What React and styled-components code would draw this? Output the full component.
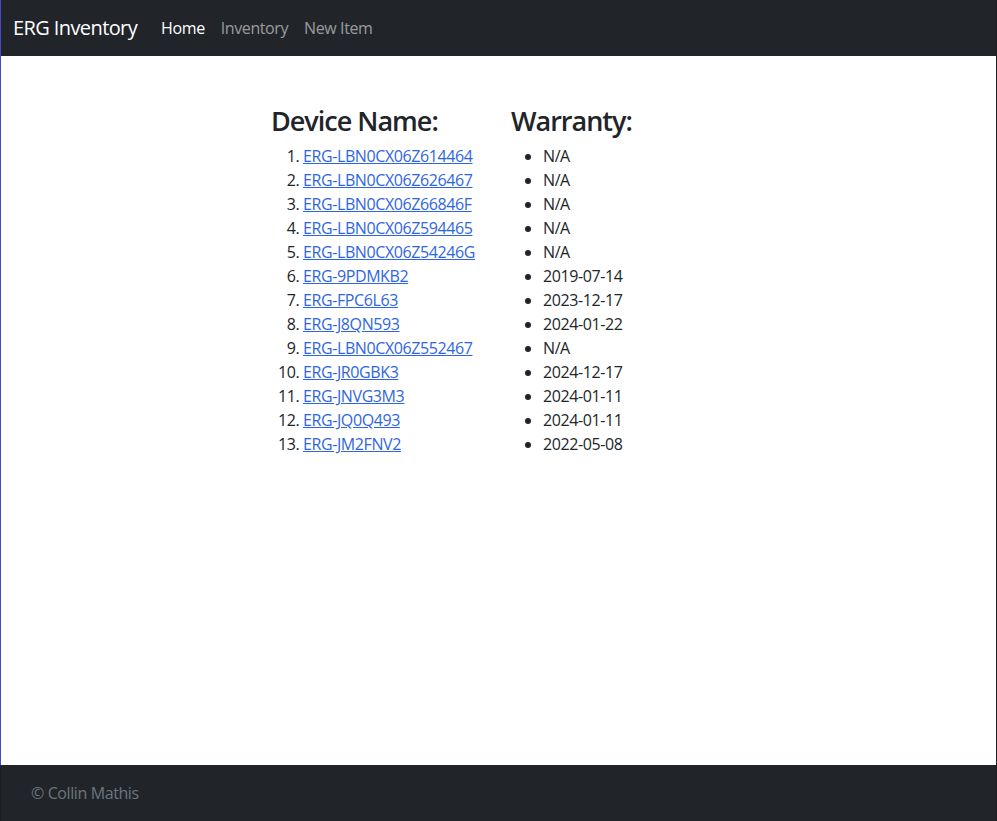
import React from "react";
import styled, { createGlobalStyle } from "styled-components";

const Global = createGlobalStyle`
  html, body { margin: 0; padding: 0; }
  body {
    font-family: "Open Sans", "Noto Sans", sans-serif;
    font-size: 16px;
    line-height: 24px;
    letter-spacing: -0.4px;
    color: #212529;
    background: #fff;
  }
`;

const Page = styled.div`
  display: flex;
  flex-direction: column;
  height: 821px;
  border-right: 1px solid #1b1d21;
  box-sizing: border-box;
`;

const NavBar = styled.nav`
  display: flex;
  align-items: center;
  height: 56px;
  flex: none;
  padding: 0 12px;
  background: #212529;
  border-left: 1px solid #4a48c8;
`;

const Brand = styled.a`
  font-size: 20px;
  letter-spacing: -0.6px;
  color: #fff;
  margin-right: 16px;
  text-decoration: none;
`;

const NavLink = styled.a`
  padding: 8px;
  color: ${(p) => (p.$active ? "#fff" : "rgba(255,255,255,0.55)")};
  text-decoration: none;
`;

const Main = styled.main`
  flex: 1;
  display: flex;
  padding: 49px 0 0 270px;
  border-left: 1px solid #4a48c8;
`;

const Column = styled.section`
  width: ${(p) => p.$width || "auto"};
`;

const Heading = styled.h3`
  font-size: 27px;
  font-weight: 600;
  letter-spacing: -1px;
  line-height: 1.2;
  margin: 0 0 7px;
`;

const OList = styled.ol`
  margin: 0;
  padding-left: 32px;
`;

const UList = styled.ul`
  margin: 0;
  padding-left: 32px;
`;

const Link = styled.a`
  color: #2f66e0;
  text-decoration: underline;
`;

const Footer = styled.footer`
  flex: none;
  height: 56px;
  display: flex;
  align-items: center;
  padding-left: 30px;
  background: #212529;
  color: #6c757d;
  border-left: 1px solid #1b1d21;
`;

const items = [
  ["ERG-LBN0CX06Z614464", "N/A"],
  ["ERG-LBN0CX06Z626467", "N/A"],
  ["ERG-LBN0CX06Z66846F", "N/A"],
  ["ERG-LBN0CX06Z594465", "N/A"],
  ["ERG-LBN0CX06Z54246G", "N/A"],
  ["ERG-9PDMKB2", "2019-07-14"],
  ["ERG-FPC6L63", "2023-12-17"],
  ["ERG-J8QN593", "2024-01-22"],
  ["ERG-LBN0CX06Z552467", "N/A"],
  ["ERG-JR0GBK3", "2024-12-17"],
  ["ERG-JNVG3M3", "2024-01-11"],
  ["ERG-JQ0Q493", "2024-01-11"],
  ["ERG-JM2FNV2", "2022-05-08"],
];

export default function App() {
  return (
    <>
      <Global />
      <Page>
        <NavBar>
          <Brand href="#">ERG Inventory</Brand>
          <NavLink href="#" $active>Home</NavLink>
          <NavLink href="#">Inventory</NavLink>
          <NavLink href="#">New Item</NavLink>
        </NavBar>
        <Main>
          <Column $width="240px">
            <Heading>Device Name:</Heading>
            <OList>
              {items.map(([n]) => (
                <li key={n}>
                  <Link href="#">{n}</Link>
                </li>
              ))}
            </OList>
          </Column>
          <Column>
            <Heading>Warranty:</Heading>
            <UList>
              {items.map(([n, w]) => (
                <li key={n}>{w}</li>
              ))}
            </UList>
          </Column>
        </Main>
        <Footer>© Collin Mathis</Footer>
      </Page>
    </>
  );
}
